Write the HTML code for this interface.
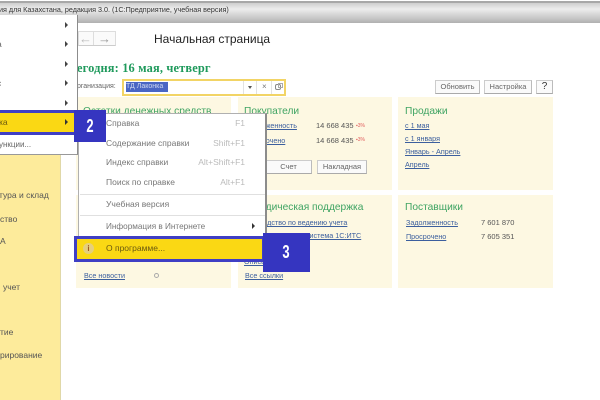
<!DOCTYPE html>
<html><head><meta charset="utf-8"><style>
html,body{margin:0;padding:0}
body{width:600px;height:400px;overflow:hidden;position:relative;background:#fff;font-family:"Liberation Sans","Noto Sans CJK SC",sans-serif;font-size:8px;color:#555}
#w{left:0;top:0;width:600px;height:400px;filter:blur(.3px)}
div,span,a{position:absolute;white-space:nowrap}
.g{color:#3fa463;font-size:10.2px;line-height:13px}
a{color:#3c5f9e;text-decoration:underline;font-size:7.2px;line-height:10px}
.c{background:#fdf8e2}
.n{color:#555;font-size:7.5px;line-height:10px}
.r{color:#e05a5a;font-size:5px;line-height:8px}
.b{background:#fafafa;border:1px solid #ccc;border-bottom-color:#aaa;border-right-color:#bbb;box-sizing:border-box;text-align:center;font-size:7.5px;color:#666}
.m{color:#777;font-size:8.5px;line-height:11px;left:106px}
.k{color:#bbb;font-size:8.5px;line-height:11px;right:355px}
.t{width:0;height:0;border-left:3px solid #444;border-top:3px solid transparent;border-bottom:3px solid transparent}
.s{color:#555;font-size:8.5px;line-height:11px;left:0}
.d{color:#fff;font-weight:bold;font-size:18px;text-align:center;background:#3535c0}
.d span{position:static;display:inline-block;transform:scaleX(.72)}
</style></head><body><div id="w">
<div style="left:0;top:0;width:600px;height:1px;background:#fff"></div>
<div style="left:0;top:1px;width:600px;height:2px;background:#a8a8a8"></div>
<div style="left:0;top:3px;width:600px;height:20px;background:linear-gradient(#cfcfcf,#ededed 30%,#c8c8c8 75%,#b0b0b0)"></div>
<div style="left:-1px;top:4px;font-size:7.2px;line-height:11px;color:#333">ия для Казахстана, редакция 3.0. (1С:Предприятие, учебная версия)</div>

<div style="left:78px;top:31px;width:38px;height:15px;background:#fafafa;border:1px solid #ddd;border-bottom-color:#ccc;box-sizing:border-box"></div>
<div style="left:93px;top:32px;width:1px;height:13px;background:#ddd"></div>
<div style="left:79px;top:31px;font-size:13px;line-height:15px;color:#bbb">←</div>
<div style="left:98px;top:31px;font-size:13px;line-height:15px;color:#999">→</div>
<div style="left:154px;top:32px;font-size:12px;line-height:15px;color:#222">Начальная страница</div>
<div style="left:77px;top:61px;font-family:'Liberation Serif',serif;font-weight:bold;font-size:12.4px;line-height:14px;color:#1f9a5c;letter-spacing:.15px">егодня: 16 мая, четверг</div>
<div style="left:77px;top:82px;font-size:7px;line-height:10px;color:#666">рганизация:</div>
<div style="left:122px;top:79px;width:164px;height:17px;border:2px solid #f2d465;box-sizing:border-box;background:#fff"></div>
<div style="left:126px;top:82px;width:42px;height:10px;background:#4a66c4;color:#cfd8ef;font-size:7px;line-height:10px">ТД Лаконка</div>
<div style="left:243px;top:81px;width:1px;height:13px;background:#e2e2e2"></div>
<div style="left:256px;top:81px;width:1px;height:13px;background:#e2e2e2"></div>
<div style="left:271px;top:81px;width:1px;height:13px;background:#e2e2e2"></div>
<div style="left:248px;top:86px;width:0;height:0;border-top:3px solid #555;border-left:2px solid transparent;border-right:2px solid transparent"></div>
<div style="left:262px;top:82px;font-size:8px;line-height:10px;color:#777">×</div>
<div style="left:275px;top:84px;width:4px;height:4px;border:1px solid #888;border-radius:2px"></div>
<div style="left:278px;top:83px;width:3px;height:3px;border:1px solid #aaa"></div>

<div class="b" style="left:435px;top:80px;width:45px;height:14px;line-height:12px">Обновить</div>
<div class="b" style="left:484px;top:80px;width:48px;height:14px;line-height:12px">Настройка</div>
<div class="b" style="left:536px;top:80px;width:17px;height:14px;line-height:12px;font-size:10px;color:#333">?</div>

<div class="c" style="left:76px;top:97px;width:155px;height:93px"></div>
<div class="c" style="left:238px;top:97px;width:154px;height:93px"></div>
<div class="c" style="left:398px;top:97px;width:155px;height:93px"></div>
<div class="c" style="left:76px;top:195px;width:155px;height:93px"></div>
<div class="c" style="left:238px;top:195px;width:154px;height:93px"></div>
<div class="c" style="left:398px;top:195px;width:155px;height:93px"></div>

<div class="g" style="left:83px;top:105px">Остатки денежных средств</div>
<div class="g" style="left:244px;top:105px">Покупатели</div>
<a style="left:245px;top:121px">Задолженность</a>
<a style="left:245px;top:136px">Просрочено</a>
<div class="n" style="left:316px;top:121px">14 668 435</div>
<div class="n" style="left:316px;top:136px">14 668 435</div>
<div class="r" style="left:356px;top:122px">▪3%</div>
<div class="r" style="left:356px;top:136px">▪3%</div>
<div class="b" style="left:265px;top:160px;width:47px;height:14px;line-height:12px">Счет</div>
<div class="b" style="left:317px;top:160px;width:50px;height:14px;line-height:12px">Накладная</div>

<div class="g" style="left:405px;top:105px">Продажи</div>
<a style="left:405px;top:121px">с 1 мая</a>
<a style="left:405px;top:134px">с 1 января</a>
<a style="left:405px;top:147px">Январь - Апрель</a>
<a style="left:405px;top:160px">Апрель</a>

<div class="g" style="left:244px;top:201px">Юридическая поддержка</div>
<a style="left:244px;top:218px">Руководство по ведению учета</a>
<a style="left:244px;top:231px">Информационная система 1С:ИТС</a>
<a style="left:244px;top:257px">Описание</a>
<a style="left:245px;top:271px">Все ссылки</a>

<div class="g" style="left:405px;top:201px">Поставщики</div>
<a style="left:406px;top:218px">Задолженность</a>
<a style="left:406px;top:232px">Просрочено</a>
<div class="n" style="left:481px;top:218px">7 601 870</div>
<div class="n" style="left:481px;top:232px">7 605 351</div>

<a style="left:84px;top:271px">Все новости</a>
<div style="left:154px;top:273px;width:3px;height:3px;border:1px solid #aaa;border-radius:50%"></div>

<div style="left:0;top:155px;width:60px;height:245px;background:#fdeb9b"></div>
<div style="left:60px;top:155px;width:1px;height:245px;background:#e0d8a8"></div>
<div class="s" style="top:190px;left:-1px">тура и склад</div>
<div class="s" style="top:214px">ство</div>
<div class="s" style="top:236px">А</div>
<div class="s" style="top:282px;left:3px">учет</div>
<div class="s" style="top:327px">тие</div>
<div class="s" style="top:350px">рирование</div>

<div style="left:0;top:15px;width:78px;height:140px;background:#fff;border-right:1px solid #8c8c8c;border-bottom:1px solid #999;box-sizing:border-box"></div>
<div class="t" style="left:65px;top:22px"></div>
<div class="t" style="left:65px;top:41px"></div>
<div class="t" style="left:65px;top:61px"></div>
<div class="t" style="left:65px;top:80px"></div>
<div class="t" style="left:65px;top:100px"></div>
<div class="s" style="top:39px;left:-3px;color:#666">а</div>
<div class="s" style="top:78px;left:-3px;color:#666">с</div>
<div style="left:0;top:110px;width:76px;height:25px;background:#fad814;border-top:3px solid #3f3fc4;border-bottom:3px solid #3f3fc4;box-sizing:border-box"></div>
<div class="s" style="top:117px;left:-1px;color:#6b5a10">ка</div>
<div class="t" style="left:65px;top:119px;border-left-color:#333"></div>
<div class="s" style="top:139px;left:-1px;color:#666;font-size:8px">ункции...</div>

<div style="left:78px;top:113px;width:189px;height:125px;background:#fff;border:1px solid #b0b0b0;border-right:2px solid #8c8c8c;box-sizing:border-box"></div>
<div class="m" style="top:118px">Справка</div><div class="k" style="top:118px">F1</div>
<div class="m" style="top:138px">Содержание справки</div><div class="k" style="top:138px">Shift+F1</div>
<div class="m" style="top:157px">Индекс справки</div><div class="k" style="top:157px">Alt+Shift+F1</div>
<div class="m" style="top:177px">Поиск по справке</div><div class="k" style="top:177px">Alt+F1</div>
<div style="left:80px;top:194px;width:185px;height:1px;background:#e0e0e0"></div>
<div class="m" style="top:199px">Учебная версия</div>
<div style="left:80px;top:215px;width:185px;height:1px;background:#e0e0e0"></div>
<div class="m" style="top:221px;font-size:8.2px">Информация в Интернете</div>
<div class="t" style="left:252px;top:223px;border-left-color:#333"></div>

<div style="left:74px;top:236px;width:191px;height:26px;background:#fad814;border:3px solid #3f3fc4;box-sizing:border-box"></div>
<div style="left:83px;top:243px;width:11px;height:11px;border-radius:50%;background:#e6cf7c;color:#a05a20;font-size:8px;line-height:11px;text-align:center;font-weight:bold">i</div>
<div class="m" style="top:243px;color:#6b5a10">О программе...</div>

<div class="d" style="left:74px;top:110px;width:32px;height:32px;line-height:32px"><span>2</span></div>
<div class="d" style="left:263px;top:233px;width:47px;height:39px;line-height:39px"><span>3</span></div>
</div></body></html>
